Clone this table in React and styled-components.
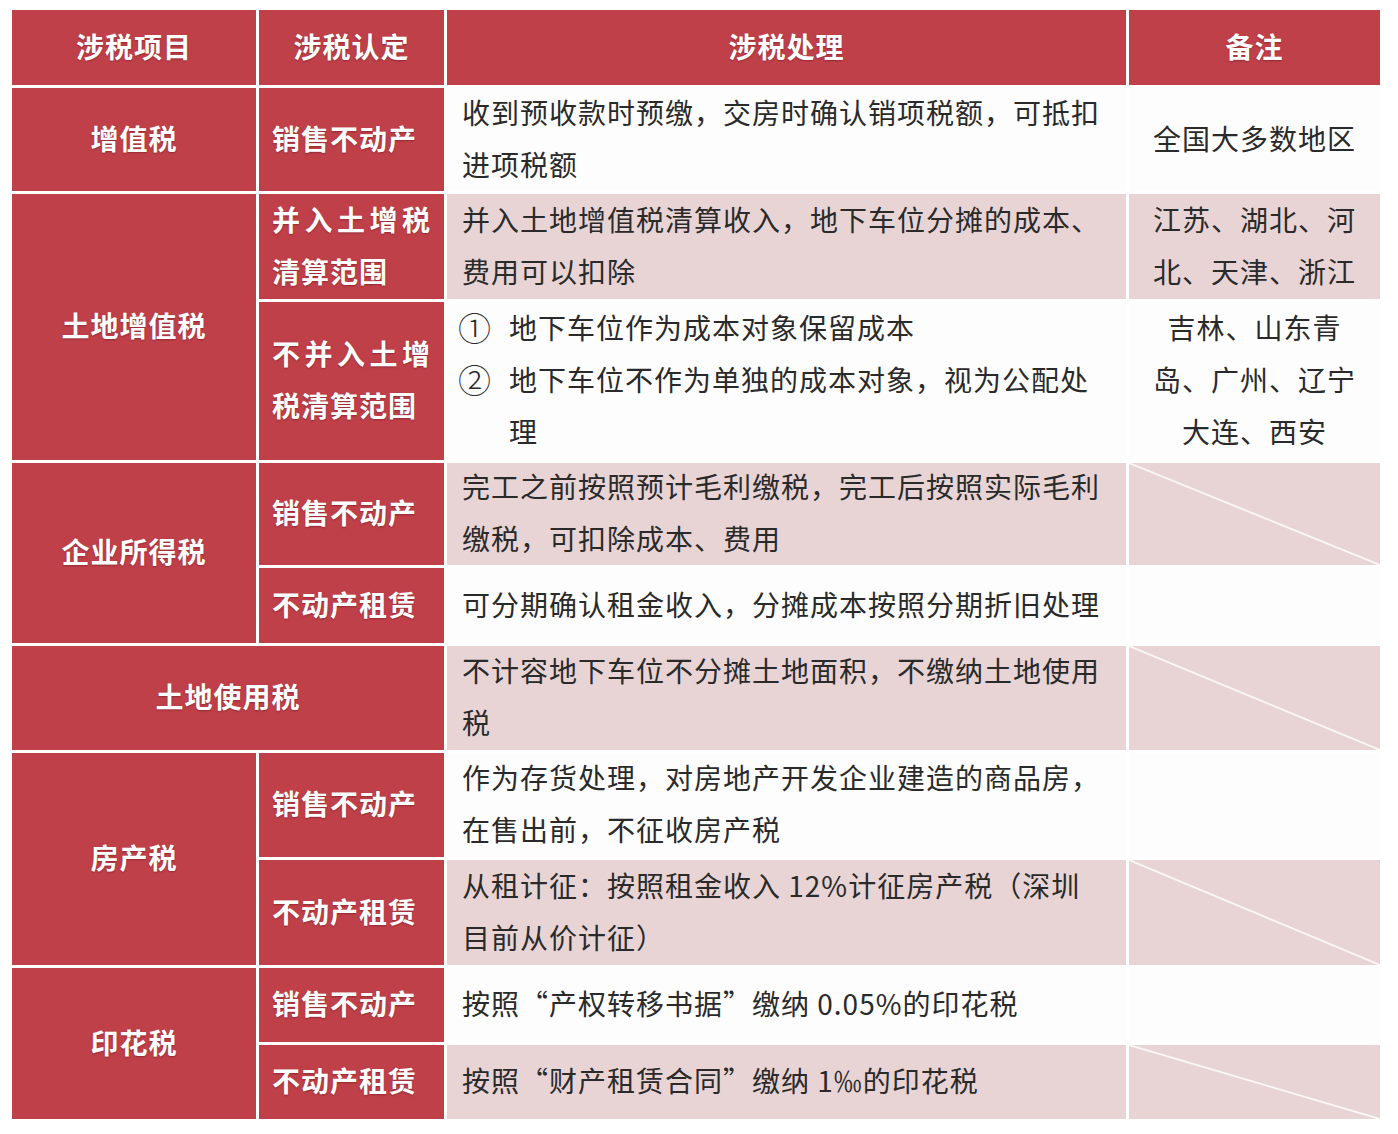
import styled, { createGlobalStyle, css } from "styled-components";

const GlobalStyle = createGlobalStyle`
  html, body {
    margin: 0;
    background: #ffffff;
  }
  body {
    font-family: "Noto Sans CJK SC", "Noto Sans", sans-serif;
  }
`;

const Page = styled.div`
  padding: 10px 0 0 12px;
  min-height: 1124px;
`;

const Table = styled.div`
  display: grid;
  width: 1368px;
  grid-template-columns: 244px 185px 679px 251px;
  grid-template-rows: 75px 103px 105px 158px 102px 75px 104px 104px 105px 74px 74px;
  gap: 3px;
  background: #ffffff;
  font-size: 28px;
  letter-spacing: 1px;
`;

const redCell = css`
  background: #c0404a;
  color: #ffffff;
  font-weight: 700;
  text-shadow: 0 1px 2px rgba(90, 10, 20, 0.45);
  display: flex;
  align-items: center;
  padding-bottom: 4px;
  grid-row: ${(p) => (p.$rows ? `span ${p.$rows}` : "auto")};
  grid-column: ${(p) => (p.$cols ? `span ${p.$cols}` : "auto")};
`;

const HeadCell = styled.div`
  ${redCell}
  justify-content: center;
`;

const TaxName = styled.div`
  ${redCell}
  justify-content: center;
`;

const TaxRule = styled.div`
  ${redCell}
  padding-left: 13px;
  padding-right: 13px;
  line-height: 52px;
  text-align: justify;
`;

const toneBg = {
  white: "#fdfdfd",
  pink: "#e8d4d5",
};

const Detail = styled.div`
  background: ${(p) => toneBg[p.$tone]};
  color: #2a2a2a;
  display: flex;
  align-items: center;
  padding: 0 14px 4px 15px;
  line-height: 52px;
`;

const Note = styled.div`
  background: ${(p) => toneBg[p.$tone]};
  color: #2a2a2a;
  display: flex;
  align-items: center;
  justify-content: center;
  text-align: center;
  padding: 0 20px 4px;
  line-height: 52px;
  ${(p) =>
    p.$slash &&
    css`
      background-image: linear-gradient(
        to top right,
        transparent calc(50% - 1.5px),
        #ffffff 50%,
        transparent calc(50% + 1.5px)
      );
    `}
`;

const MarkList = styled.ol`
  list-style: none;
  margin: 0;
  padding: 0;
`;

const MarkItem = styled.li`
  display: flex;
`;

const Mark = styled.span`
  flex: 0 0 51px;
  margin-left: -4px;
  font-size: 33px;
  font-weight: 300;
  line-height: 52px;
`;

export default function App() {
  return (
    <Page>
      <GlobalStyle />
      <Table>
        <HeadCell>涉税项目</HeadCell>
        <HeadCell>涉税认定</HeadCell>
        <HeadCell>涉税处理</HeadCell>
        <HeadCell>备注</HeadCell>

        <TaxName>增值税</TaxName>
        <TaxRule>销售不动产</TaxRule>
        <Detail $tone="white">收到预收款时预缴，交房时确认销项税额，可抵扣进项税额</Detail>
        <Note $tone="white">全国大多数地区</Note>

        <TaxName $rows={2}>土地增值税</TaxName>
        <TaxRule>并入土增税清算范围</TaxRule>
        <Detail $tone="pink">并入土地增值税清算收入，地下车位分摊的成本、费用可以扣除</Detail>
        <Note $tone="pink">江苏、湖北、河北、天津、浙江</Note>

        <TaxRule>不并入土增税清算范围</TaxRule>
        <Detail $tone="white">
          <MarkList>
            <MarkItem>
              <Mark>①</Mark>
              <span>地下车位作为成本对象保留成本</span>
            </MarkItem>
            <MarkItem>
              <Mark>②</Mark>
              <span>地下车位不作为单独的成本对象，视为公配处理</span>
            </MarkItem>
          </MarkList>
        </Detail>
        <Note $tone="white">吉林、山东青岛、广州、辽宁大连、西安</Note>

        <TaxName $rows={2}>企业所得税</TaxName>
        <TaxRule>销售不动产</TaxRule>
        <Detail $tone="pink">完工之前按照预计毛利缴税，完工后按照实际毛利缴税，可扣除成本、费用</Detail>
        <Note $tone="pink" $slash />

        <TaxRule>不动产租赁</TaxRule>
        <Detail $tone="white">可分期确认租金收入，分摊成本按照分期折旧处理</Detail>
        <Note $tone="white" />

        <TaxName $cols={2}>土地使用税</TaxName>
        <Detail $tone="pink">不计容地下车位不分摊土地面积，不缴纳土地使用税</Detail>
        <Note $tone="pink" $slash />

        <TaxName $rows={2}>房产税</TaxName>
        <TaxRule>销售不动产</TaxRule>
        <Detail $tone="white">作为存货处理，对房地产开发企业建造的商品房，在售出前，不征收房产税</Detail>
        <Note $tone="white" />

        <TaxRule>不动产租赁</TaxRule>
        <Detail $tone="pink">
          从租计征：按照租金收入 12%计征房产税（深圳
          <br />
          目前从价计征）
        </Detail>
        <Note $tone="pink" $slash />

        <TaxName $rows={2}>印花税</TaxName>
        <TaxRule>销售不动产</TaxRule>
        <Detail $tone="white">按照“产权转移书据”缴纳 0.05%的印花税</Detail>
        <Note $tone="white" />

        <TaxRule>不动产租赁</TaxRule>
        <Detail $tone="pink">按照“财产租赁合同”缴纳 1‰的印花税</Detail>
        <Note $tone="pink" $slash />
      </Table>
    </Page>
  );
}
